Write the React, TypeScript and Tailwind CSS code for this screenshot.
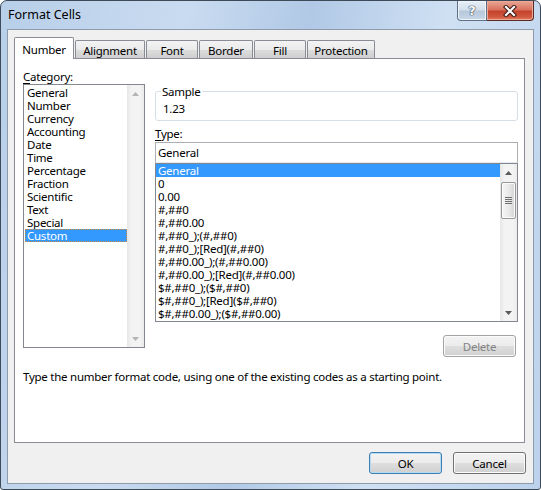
import React from "react";

const categories = [
	"General",
	"Number",
	"Currency",
	"Accounting",
	"Date",
	"Time",
	"Percentage",
	"Fraction",
	"Scientific",
	"Text",
	"Special",
	"Custom",
];

const types = [
	"General",
	"0",
	"0.00",
	"#,##0",
	"#,##0.00",
	"#,##0_);(#,##0)",
	"#,##0_);[Red](#,##0)",
	"#,##0.00_);(#,##0.00)",
	"#,##0.00_);[Red](#,##0.00)",
	"$#,##0_);($#,##0)",
	"$#,##0_);[Red]($#,##0)",
	"$#,##0.00_);($#,##0.00)",
];

const tabs = [
	{ label: "Number", w: "w-[60px]" },
	{ label: "Alignment", w: "w-[70px]" },
	{ label: "Font", w: "w-[52px]" },
	{ label: "Border", w: "w-[54px]" },
	{ label: "Fill", w: "w-[52px]" },
	{ label: "Protection", w: "w-[68px]" },
];

const Arrow = ({ up, disabled }: { up?: boolean; disabled?: boolean }) => (
	<svg width="7" height="4" viewBox="0 0 7 4">
		<path
			d={up ? "M0 4 L3.5 0 L7 4 Z" : "M0 0 L3.5 4 L7 0 Z"}
			fill={disabled ? "#b4b4b4" : "#5a5a5a"}
		/>
	</svg>
);

const ScrollBar = ({ thumb, disabled }: { thumb?: boolean; disabled?: boolean }) => (
	<div className="flex w-[17px] flex-col bg-[linear-gradient(90deg,#e6e6e6,#f3f3f3_25%,#f3f3f3_75%,#ebebeb)]">
		<div className="flex h-[17px] items-center justify-center">
			<Arrow up disabled={disabled} />
		</div>
		<div className="flex-1">
			{thumb && (
				<div className="mx-[1px] mt-[1px] flex h-[37px] flex-col items-center justify-center gap-[1px] rounded-[2px] border border-[#979797] bg-[linear-gradient(90deg,#f6f6f6,#e9e9e9_50%,#d6d6d6)] shadow-[inset_0_0_0_1px_#fbfbfb]">
					<div className="h-px w-[7px] bg-[#707070]" />
					<div className="h-px w-[7px] bg-[#707070]" />
					<div className="h-px w-[7px] bg-[#707070]" />
					<div className="h-px w-[7px] bg-[#707070]" />
				</div>
			)}
		</div>
		<div className="flex h-[17px] items-center justify-center">
			<Arrow disabled={disabled} />
		</div>
	</div>
);

const Button = ({
	label,
	primary,
	disabled,
}: {
	label: string;
	primary?: boolean;
	disabled?: boolean;
}) => (
	<div
		className={`flex h-[22px] w-[73px] items-center justify-center rounded-[3px] border bg-[linear-gradient(180deg,#f3f3f3_0%,#ececec_48%,#dedede_52%,#d0d0d0_100%)] ${
			primary
				? "border-[#3c7fb1] shadow-[inset_0_0_0_1px_#b5dbf3]"
				: disabled
					? "border-[#a3a3a3] shadow-[inset_0_0_0_1px_#fbfbfb] text-[#838383]"
					: "border-[#707070] shadow-[inset_0_0_0_1px_#fbfbfb]"
		}`}
	>
		{label}
	</div>
);

export default function App() {
	return (
		<div className="h-[490px] w-[541px] bg-white font-['Noto_Sans',sans-serif] text-[11.5px] leading-[13px] tracking-[-0.25px] text-black">
			<div className="flex h-[490px] w-[541px] flex-col rounded-t-[7px] rounded-b-[3px] border border-[#3e4a57] bg-[linear-gradient(100deg,#b8cfe9_0%,#c9dbf0_30%,#b1c9e6_50%,#cfe0f3_72%,#bcd2ec_100%)]">
				{/* title bar */}
				<div className="flex h-[28px] items-start justify-between">
					<div className="pl-[7px] pt-[6px] text-[12.5px] leading-[16px] tracking-normal text-black">
						Format Cells
					</div>
					<div className="mr-[6px] flex">
						<div className="flex h-[20px] w-[30px] items-center justify-center rounded-bl-[4px] border border-t-0 border-[#5d7088] bg-[linear-gradient(180deg,#e7eef6_0%,#d3e0ec_45%,#b6c8da_55%,#c9d8e8_100%)] shadow-[inset_0_0_0_1px_#eef4fa]">
							<span className="font-['DejaVu_Sans',sans-serif] text-[13px] font-bold leading-[13px] text-white [text-shadow:0_0_1px_#2b3a4c,0_0_1px_#2b3a4c,0_0_1px_#2b3a4c]">
								?
							</span>
						</div>
						<div className="flex h-[20px] w-[47px] items-center justify-center rounded-br-[4px] border border-t-0 border-l-0 border-[#5b2a22] bg-[linear-gradient(180deg,#e8a795_0%,#d9735f_45%,#c4432c_55%,#d2583e_85%,#e08a6c_100%)] shadow-[inset_0_0_0_1px_#eda998]">
							<svg width="14" height="12" viewBox="0 0 14 12">
								<path d="M3 2 L11 10 M11 2 L3 10" stroke="#3a1a14" strokeWidth="4.2" strokeLinecap="square" />
								<path d="M3 2 L11 10 M11 2 L3 10" stroke="#ffffff" strokeWidth="2.2" strokeLinecap="square" />
							</svg>
						</div>
					</div>
				</div>

				{/* client area */}
				<div className="mx-[6px] mb-[5px] flex flex-1 flex-col border border-[#8d9bac] bg-[#f0f0f0] pl-[6px] pr-[7px] pt-[7px]">
					{/* tabs */}
					<div className="flex h-[21px] items-end gap-[1px]">
						{tabs.map((t, i) =>
							i === 0 ? (
								<div
									key={t.label}
									className={`relative z-10 -mb-px flex h-[22px] ${t.w} items-center justify-center rounded-t-[2px] border border-b-0 border-[#898c95] bg-white pb-[3px] pt-[4px]`}
								>
									{t.label}
								</div>
							) : (
								<div
									key={t.label}
									className={`flex h-[18px] ${t.w} items-center justify-center rounded-t-[2px] border border-b-0 border-[#898c95] bg-[linear-gradient(180deg,#f3f3f3_0%,#ebebeb_50%,#dddddd_51%,#cfcfcf_100%)] pt-[1px]`}
								>
									{t.label}
								</div>
							)
						)}
					</div>

					{/* panel */}
					<div className="flex h-[385px] w-[511px] flex-col border border-[#898c95] bg-white pl-[8px] pt-[10px]">
						<div className="flex items-start">
							{/* category */}
							<div className="flex flex-col">
								<div className="h-[15px] leading-[15px]">
									<span className="underline underline-offset-2">C</span>ategory:
								</div>
								<div className="flex h-[264px] w-[122px] border border-[#828790] bg-white">
									<div className="flex flex-1 flex-col pl-px pt-[1px]">
										{categories.map((c) =>
											c === "Custom" ? (
												<div
													key={c}
													className="h-[13px] border border-dotted border-[#d08a40] bg-[#3399ff] pl-[1px] leading-[11px] text-white"
												>
													{c}
												</div>
											) : (
												<div key={c} className="h-[13px] pl-[2px]">
													{c}
												</div>
											)
										)}
									</div>
									<ScrollBar disabled />
								</div>
							</div>

							{/* type */}
							<div className="ml-[10px] flex w-[363px] flex-col pt-[15px]">
								<div className="relative mt-[7px] h-[30px] rounded-[3px] border border-[#d5dfe5] pl-[7px] pt-[10px]">
									<div className="absolute -top-[8px] left-[5px] bg-white px-px leading-[15px]">
										Sample
									</div>
									1.23
								</div>
								<div className="mt-[5px] h-[15px] leading-[15px]">
									<span className="underline underline-offset-2">T</span>ype:
								</div>
								<div className="mt-px flex h-[21px] items-center border border-[#abadb3] border-b-[#e3e9ef] pl-[2px]">
									General
								</div>
								<div className="flex h-[159px] border border-[#828790]">
									<div className="flex flex-1 flex-col">
										{types.map((t, i) => (
											<div
												key={t}
												className={`h-[13px] pl-[2px] ${i === 0 ? "bg-[#3399ff] text-white" : ""}`}
											>
												{t}
											</div>
										))}
									</div>
									<ScrollBar thumb />
								</div>
								<div className="mr-[2px] mt-[13px] flex justify-end">
									<Button label="Delete" disabled />
								</div>
							</div>
						</div>
						<div className="mt-[12px] leading-[15px]">
							Type the number format code, using one of the existing codes as a starting point.
						</div>
					</div>

					{/* buttons */}
					<div className="mt-[9px] flex justify-end gap-[11px]">
						<Button label="OK" primary />
						<Button label="Cancel" />
					</div>
				</div>
			</div>
		</div>
	);
}
